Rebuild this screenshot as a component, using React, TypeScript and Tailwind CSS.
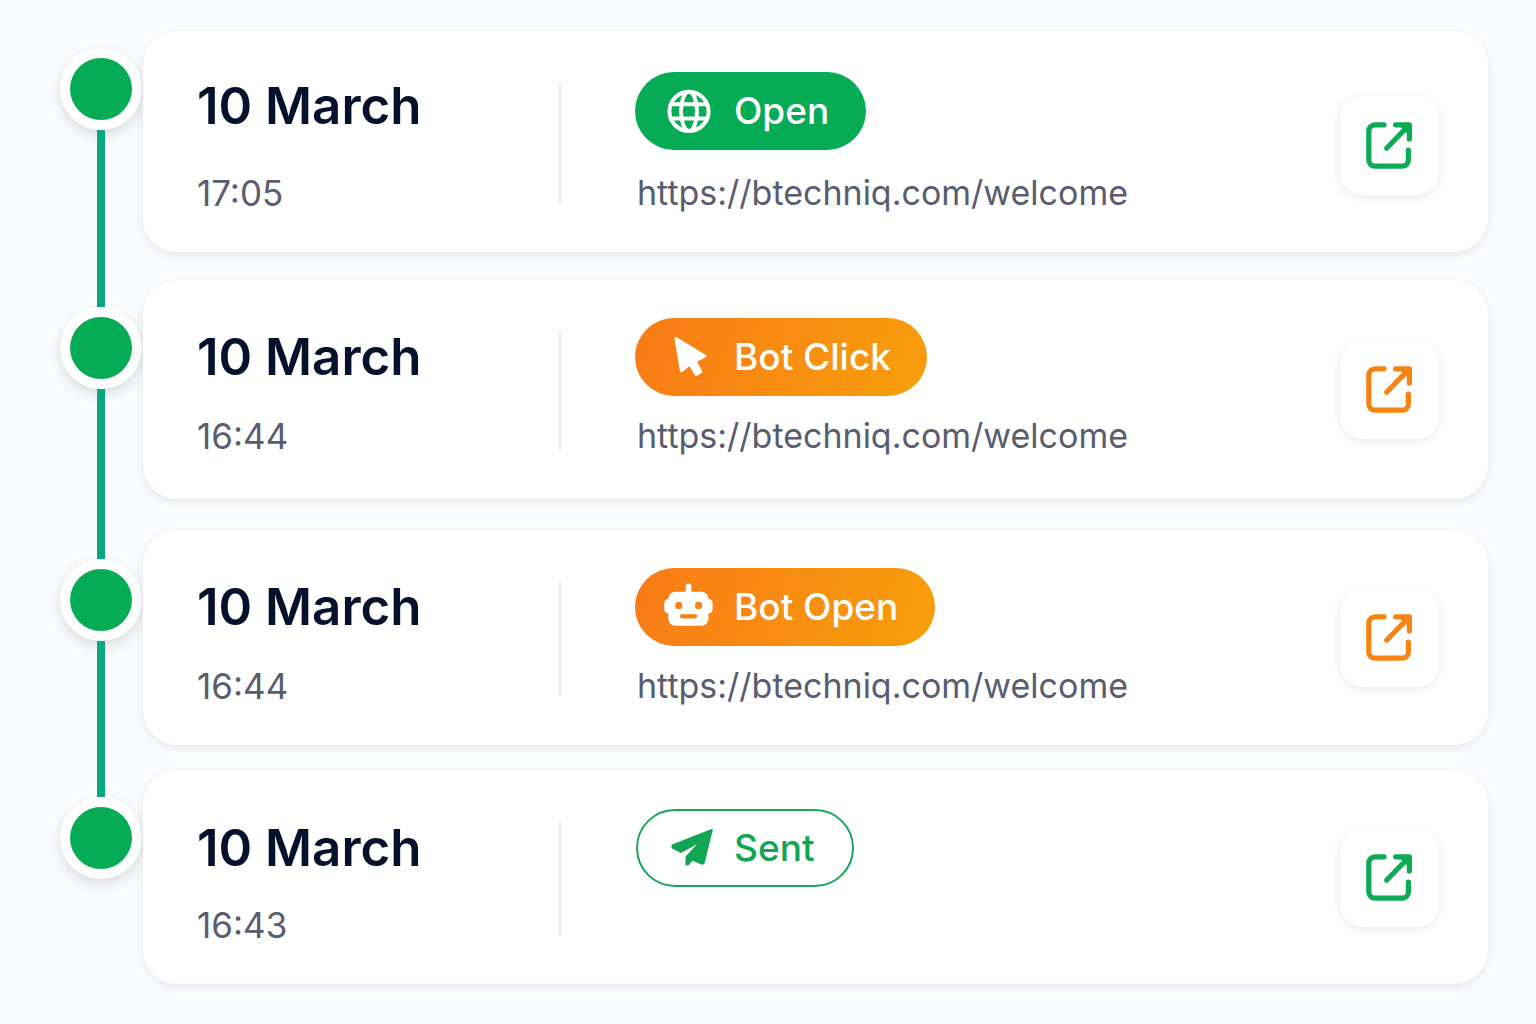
import React from "react";
import clsx from "clsx";

type Variant = "open" | "botClick" | "botOpen" | "sent";

interface TimelineEvent {
  id: number;
  date: string;
  time: string;
  variant: Variant;
  label: string;
  url?: string;
  // vertical rhythm of the row
  row: string;
  body: string;
  title: string;
  lead: string;
}

const events: TimelineEvent[] = [
  {
    id: 1,
    date: "10 March",
    time: "17:05",
    variant: "open",
    label: "Open",
    url: "https://btechniq.com/welcome",
    row: "pb-7",
    body: "pt-[41px] pb-[39px] gap-[23px]",
    title: "leading-[68px]",
    lead: "h-[17px] bg-transparent",
  },
  {
    id: 2,
    date: "10 March",
    time: "16:44",
    variant: "botClick",
    label: "Bot Click",
    url: "https://btechniq.com/welcome",
    row: "pb-[31px]",
    body: "pt-[38px] pb-[43px] gap-5",
    title: "leading-[78px]",
    lead: "h-[27px] bg-[#09a882]",
  },
  {
    id: 3,
    date: "10 March",
    time: "16:44",
    variant: "botOpen",
    label: "Bot Open",
    url: "https://btechniq.com/welcome",
    row: "pb-[25px]",
    body: "pt-[38px] pb-[39px] gap-5",
    title: "leading-[78px]",
    lead: "h-[29px] bg-[#09a882]",
  },
  {
    id: 4,
    date: "10 March",
    time: "16:43",
    variant: "sent",
    label: "Sent",
    row: "",
    body: "pt-[39px] pb-[39px] gap-[18px]",
    title: "leading-[78px]",
    lead: "h-[27px] bg-[#09a882]",
  },
];

const GlobeIcon = () => (
  <svg width="50" height="50" viewBox="0 0 50 50" fill="none" stroke="currentColor" strokeWidth="4">
    <circle cx="25" cy="25.4" r="19.6" />
    <ellipse cx="25" cy="25.4" rx="8" ry="19.6" />
    <path d="M7 18.2h36M7 32.6h36" />
  </svg>
);

const CursorIcon = () => (
  <svg width="50" height="50" viewBox="0 0 50 50" fill="currentColor" stroke="currentColor" strokeWidth="3" strokeLinejoin="round">
    <path d="M12 6.5L41 24.2L31 28.8L36.8 40L32.2 42.4L25.6 31.8L17.4 38.8Z" />
  </svg>
);

const RobotIcon = () => (
  <svg width="50" height="50" viewBox="0 0 50 50" fill="currentColor">
    <rect x="21.8" y="1.4" width="5.6" height="14" rx="2.8" />
    <rect x="0.2" y="17" width="9" height="14.6" rx="4.5" />
    <rect x="39.6" y="17" width="9" height="14.6" rx="4.5" />
    <path
      fillRule="evenodd"
      d="M11.4 9.8h26a7 7 0 0 1 7 7v20a7 7 0 0 1-7 7h-26a7 7 0 0 1-7-7v-20a7 7 0 0 1 7-7ZM14.8 19.8a3.6 3.6 0 1 0 0 7.2a3.6 3.6 0 0 0 0-7.2ZM34.6 19.8a3.6 3.6 0 1 0 0 7.2a3.6 3.6 0 0 0 0-7.2ZM17.6 32.2a1.6 1.6 0 0 0-1.6 1.8c0.2 1.6 1 2.6 2.6 2.6h12a2.8 2.8 0 0 0 2.6-2.6a1.6 1.6 0 0 0-1.6-1.8Z"
    />
  </svg>
);

const PlaneIcon = () => (
  <svg width="50" height="50" viewBox="0 0 50 50" fill="currentColor" stroke="currentColor" strokeWidth="2" strokeLinejoin="round">
    <path d="M47.8 7L8.4 22.4L8.6 24.6L17 28.8L37.8 17.4L22.6 34L22.4 41.6L24.4 41.2L27.8 36.4L38.2 40.8L39.6 40Z" />
  </svg>
);

const OpenLinkIcon = () => (
  <svg width="47" height="47" viewBox="0 0 47 47" fill="none" stroke="currentColor" strokeWidth="5.2" strokeLinecap="round" strokeLinejoin="round">
    <path d="M18 2.8H9A6.2 6.2 0 0 0 2.8 9V38A6.2 6.2 0 0 0 9 44.2H36.2A6.2 6.2 0 0 0 42.4 38V28" />
    <path d="M29.6 2.8H43.4V17" />
    <path d="M41 5.2L20.6 26.2" />
    <path d="M35 4H42.4V11.4Z" fill="currentColor" strokeWidth="2" />
  </svg>
);

const badges: Record<Variant, { icon: React.ReactNode; className: string; accent: string }> = {
  open: {
    icon: <GlobeIcon />,
    className: "bg-[#05ab55] pl-[29px] pr-[37px] text-white",
    accent: "text-[#0cab54]",
  },
  botClick: {
    icon: <CursorIcon />,
    className: "bg-linear-[110deg] from-[#f97a17] to-[#f79f0b] pl-[29px] pr-9 text-white",
    accent: "text-[#f58412]",
  },
  botOpen: {
    icon: <RobotIcon />,
    className: "bg-linear-[110deg] from-[#f97a17] to-[#f79f0b] pl-[29px] pr-[37px] text-white",
    accent: "text-[#f58412]",
  },
  sent: {
    icon: <PlaneIcon />,
    className: "ml-px border-2 border-[#1ba757] pl-[26px] pr-[37px] text-[#12a654]",
    accent: "text-[#0cab54]",
  },
};

const TimelineRow = ({ event, last }: { event: TimelineEvent; last: boolean }) => {
  const badge = badges[event.variant];

  return (
    <li className="flex">
      {/* Rail */}
      <div className="flex w-[83px] flex-shrink-0 flex-col items-center pr-px">
        <div className={clsx("w-2", event.lead)} />
        <div className="flex h-[82px] w-[82px] items-center justify-center rounded-full bg-white shadow-[0_5px_14px_rgba(30,41,59,0.16)]">
          <div className="h-[62px] w-[62px] rounded-full bg-[#05ab55]" />
        </div>
        {!last && <div className="w-2 flex-1 bg-[#09a882]" />}
      </div>

      {/* Card */}
      <div className={clsx("min-w-0 flex-1", event.row)}>
        <article className="flex rounded-[34px] bg-white pr-[49px] shadow-[0_3px_10px_rgba(30,41,59,0.10)]">
          <div className={clsx("flex w-[416px] flex-shrink-0 flex-col justify-between pl-[54px]", event.body)}>
            <h2 className={clsx("text-[51px] font-semibold text-[#06112b]", event.title)}>{event.date}</h2>
            <time className="text-[35px] leading-10 text-[#595d6e]">{event.time}</time>
          </div>

          <div className="mt-[52px] mb-[49px] w-[2px] flex-shrink-0 bg-[#e9ebef]" />

          <div className={clsx("flex min-w-0 flex-1 flex-col items-start pl-[74px]", event.body)}>
            <span className={clsx("flex h-[78px] items-center gap-5 rounded-full text-[37px] font-medium whitespace-nowrap", badge.className)}>
              {badge.icon}
              {event.label}
            </span>
            {event.url && (
              <a href={event.url} className="pl-[2px] text-[34px] leading-10 text-[#595d6e]">
                {event.url}
              </a>
            )}
          </div>

          <button
            type="button"
            aria-label={`View ${event.label} details`}
            className={clsx(
              "flex h-[99px] w-[99px] flex-shrink-0 items-center justify-center self-center rounded-[22px] bg-white shadow-[0_2px_10px_rgba(30,41,59,0.10)]",
              event.id === 1 && "mt-2",
              badge.accent
            )}
          >
            <OpenLinkIcon />
          </button>
        </article>
      </div>
    </li>
  );
};

export default function App() {
  return (
    <main className="min-h-screen bg-[#fbfcfe] pt-[31px] pr-12 pb-10 pl-[60px] font-['Inter',sans-serif]">
      <ol>
        {events.map((event, index) => (
          <TimelineRow key={event.id} event={event} last={index === events.length - 1} />
        ))}
      </ol>
    </main>
  );
}
